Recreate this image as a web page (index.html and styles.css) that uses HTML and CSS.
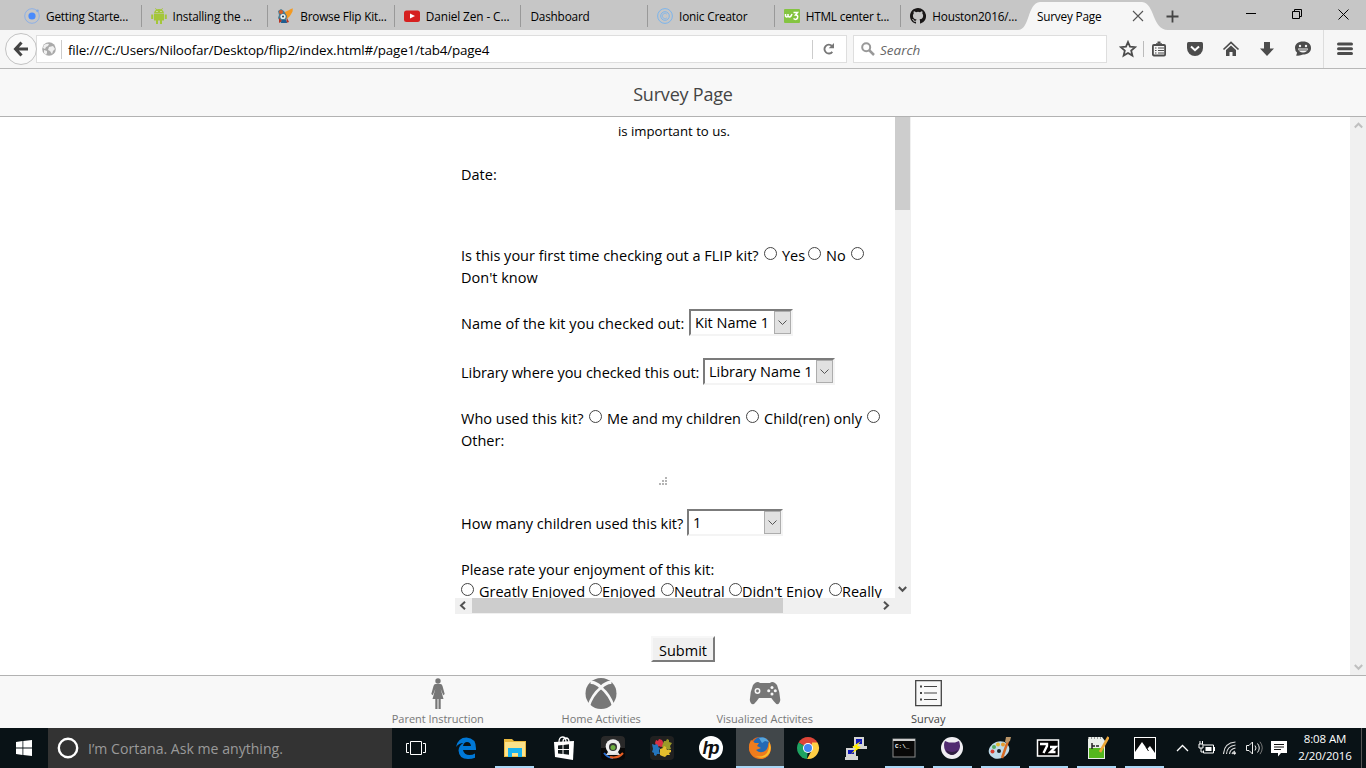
FILE: index.html
```html
<!DOCTYPE html>
<html lang="en">
<head>
<meta charset="utf-8">
<title>Survey Page</title>
<link rel="stylesheet" href="styles.css">
</head>
<body>
<div class="screen">
  <div class="tabs">
    <div class="tab"><svg width="16" height="16"><circle cx="8" cy="8" r="7.3" fill="none" stroke="#8db0e6"/><circle cx="8" cy="8" r="3.6" fill="#4a8bfc"/><circle cx="13.5" cy="2.7" r="1.3" fill="#7ca9ec"/></svg><span class="t1">Getting Starte...</span></div>
    <div class="tab"><svg width="16" height="16" fill="#a4c639"><path d="M3 5.5a5 4.600 0 0 1 10 0zM3 6h10v6.500H3zM.2 6.500h2V11h-2zM13.800 6.500h2V11h-2zM5 12h2v4H5zM9 12h2v4H9z"/><path d="M4.500.3 6 2.500M11.500.3 10 2.500" stroke="#a4c639"/><path d="M5.500 3h1v1h-1zM9.500 3h1v1h-1z" fill="#eee"/></svg><span class="t2">Installing the ...</span></div>
    <div class="tab"><svg width="17" height="16"><path d="M8 4c3-1 6-4 8-3.500-1 2 .5 2-1 4-1 2-3 6-7 7z" fill="#f39a22"/><path d="M1 3l3-2 3 2 3 5-1 5-5 2-3-5 1-3z" fill="#497b91"/><circle cx="4" cy="4" r="2" fill="#d65c27"/><circle cx="6" cy="8.500" r="2.600" fill="#e9f0ee"/><circle cx="6" cy="8.500" r="1" fill="#234"/><path d="M2 10l3 3-3 2zM10 10l2 4-3 1z" fill="#b63221"/><path d="M5 12h4l1 3H4z" fill="#1d5d90"/></svg><span class="t3">Browse Flip Kit...</span></div>
    <div class="tab"><svg width="16" height="16"><rect y="2.500" width="16" height="11.500" rx="2.500" fill="#d6201f"/><path d="M6 5.500v5l5-2.500z" fill="#fff"/></svg><span class="t4">Daniel Zen - C...</span></div>
    <div class="tab"><span class="t5">Dashboard</span></div>
    <div class="tab"><svg width="16" height="16" fill="none" stroke="#7db5ec"><circle cx="8" cy="8" r="7.400"/><circle cx="8" cy="8" r="4.300"/><path d="M10 6.200a2.700 2.700 0 1 0 0 3.600" stroke-width=".8"/></svg><span class="t6">Ionic Creator</span></div>
    <div class="tab"><svg width="16" height="16"><rect y="1" width="16" height="14" rx="1" fill="#84c441"/><path d="M1.500 6v2q1.500 2 2.500 0V6v2q1.500 2 3 0l1-2M9.500 4.500h4L11.500 7q3 0 2 3-1.500 2.500-4 .5" fill="none" stroke="#fff" stroke-width="1.500"/></svg><span class="t7">HTML center t...</span></div>
    <div class="tab last"><svg width="16" height="16" viewBox="0 0 16 16"><path fill="#191717" d="M8 0C3.580 0 0 3.580 0 8c0 3.540 2.290 6.530 5.470 7.590.4.070.55-.17.55-.38v-1.490c-2.010.37-2.530-.49-2.690-.94-.09-.23-.48-.94-.82-1.130-.28-.15-.68-.52-.01-.53.63-.01 1.080.58 1.230.82.72 1.210 1.870.87 2.330.66.070-.52.28-.87.51-1.070-1.780-.2-3.640-.89-3.640-3.950 0-.87.31-1.590.82-2.150-.08-.2-.36-1.020.080-2.120 0 0 .67-.21 2.200.82a7.600 7.600 0 0 1 4 0c1.530-1.040 2.200-.82 2.200-.82.44 1.100.16 1.920.080 2.120.51.56.82 1.270.82 2.150 0 3.070-1.870 3.750-3.650 3.950.29.25.54.73.54 1.480v2.200c0 .21.15.46.55.38A8 8 0 0 0 8 0z"/></svg><span class="t8">Houston2016/...</span></div>
    <div class="tab active"><svg class="tab-shape" width="150" height="28"><path d="M0 28C12 28 9 1 22 0H124C137 1 134 28 150 28z" fill="#f6f6f6"/></svg><span class="t9">Survey Page</span><svg class="tab-close" width="12" height="12"><path d="M1 1l10 10M11 1 1 11" stroke="#555" stroke-width="1.100"/></svg></div>
    <svg class="plus" width="13" height="13"><path d="M6.500 0.500v12M.5 6.500h12" stroke="#444" stroke-width="1.800"/></svg>
    <div class="winbtns">
      <svg width="10" height="10"><path d="M0 4.500h10" stroke="#000"/></svg>
      <svg width="10" height="10" fill="none" stroke="#000"><path d="M.5 2.500h7v7h-7zM2.500 2.500v-2h7v7h-2"/></svg>
      <svg width="11" height="11"><path d="M.5.5l10 10M10.500.5l-10 10" stroke="#000"/></svg>
    </div>
  </div>

  <div class="toolbar">
    <div class="back"><svg width="16" height="16"><path d="M8.500 1.500 2.500 8l6 6.500M2.500 8H15" fill="none" stroke="#444" stroke-width="3"/></svg></div>
    <div class="url">
      <svg width="14" height="14"><circle cx="7" cy="7" r="6.800" fill="#aaa"/><path d="M2 3q3-2 5-1L6 4 4 5 3 7 1 6zM7 5l4-1 2 3-2 2-1 3-2-3-2-1zM2 8l3 1v2l-1 2-2-2z" fill="#f0f0f0"/></svg>
      <i class="sep"></i><span class="address">file:///C:/Users/Niloofar/Desktop/flip2/index.html#/page1/tab4/page4</span>
      <i class="sep"></i><svg width="12" height="12"><path d="M9.300 8.800A4.400 4.400 0 1 1 9 3" fill="none" stroke="#777" stroke-width="1.900"/><path d="M11 0v5.200H5.700z" fill="#777"/></svg>
    </div>
    <div class="search"><svg width="14" height="14" fill="none" stroke="#999"><circle cx="5.200" cy="5.200" r="4" stroke-width="2"/><path d="M8 8l5 5" stroke-width="2.500"/></svg><span>Search</span></div>
    <div class="tools">
      <svg width="18" height="18"><path d="M9 2l2 4.700 5.200.5-4 3.400 1.200 5L9 13l-4.400 2.600 1.200-5-4-3.400L7 6.700z" fill="none" stroke="#4c4c4c" stroke-width="1.800"/></svg>
      <i class="tool-sep"></i>
      <svg width="18" height="18" fill="none" stroke="#4c4c4c"><rect x="2.900" y="5" width="12.200" height="10.500" rx="1" stroke-width="1.800"/><path d="M6 4.500h6" stroke-width="2.500"/><path d="M7.500 2.500h3" stroke-width="2"/><path d="M5 8h1.500M8 8h6M5 10.500h1.500M8 10.500h6M5 13h1.500M8 13h6"/></svg>
      <svg width="18" height="18"><path d="M1 3.500Q1 2 2.500 2h13Q17 2 17 3.500V8a8 8 0 0 1-16 0z" fill="#4c4c4c"/><path d="M5 6.500l4 3.700 4-3.700" fill="none" stroke="#fff" stroke-width="2"/></svg>
      <svg width="18" height="18"><path d="M1.500 9.500 9 2.500l7.500 7" fill="none" stroke="#4c4c4c" stroke-width="1.700"/><path d="M4 10l5-4.500 5 4.500v6h-3.500v-4h-3v4H4z" fill="#4c4c4c"/></svg>
      <svg width="18" height="18"><path d="M6 2h6v6.500h4L9 16 2 8.500h4z" fill="#4c4c4c"/></svg>
      <svg width="18" height="18"><path d="M9 1.500c5 0 8 2.500 8 6.500s-3 6.500-8 6.500Q6 16 2 15.500 3 14 3 12.500 1 11 1 8c0-4 3-6.500 8-6.500z" fill="#4c4c4c"/><circle cx="6" cy="6" r="1.200" fill="#f6f6f6"/><circle cx="12" cy="6" r="1.200" fill="#f6f6f6"/><path d="M4 8.500h10q-1 4-5 4t-5-4z" fill="#f6f6f6"/><path d="M5 10h8" stroke="#4c4c4c"/></svg>
    </div>
    <div class="menu"><svg width="16" height="14"><path d="M1.500 2h13M1.500 6.700h13M1.500 11.400h13" stroke="#4c4c4c" stroke-width="3" stroke-linecap="round"/></svg></div>
  </div>

  <div class="header"><span class="title">Survey Page</span></div>

  <div class="content">
    <div class="main">
      <div class="survey">
        <div class="form">
          <div class="intro">is important to us.</div>
          <div class="row date">Date:</div>
          <div class="row first"><span class="w298">Is this your first time checking out a FLIP kit?</span><i class="radio"></i><span class="w21">Yes</span><i class="radio"></i><span class="w20">No</span><i class="radio"></i></div>
          <div class="row">Don't know</div>
          <div class="row pick kit"><span class="w224">Name of the kit you checked out:</span><div class="select s1"><span>Kit Name 1</span><b><svg width="9" height="6"><path d="M.5.5l4 4 4-4" fill="none" stroke="#555"/></svg></b></div></div>
          <div class="row pick library"><span class="w238">Library where you checked this out:</span><div class="select s2"><span>Library Name 1</span><b><svg width="9" height="6"><path d="M.5.5l4 4 4-4" fill="none" stroke="#555"/></svg></b></div></div>
          <div class="row who"><span class="w123">Who used this kit?</span><i class="radio"></i><span class="w134">Me and my children</span><i class="radio"></i><span class="w98">Child(ren) only</span><i class="radio"></i></div>
          <div class="row">Other:</div>
          <div class="grip"><svg width="8" height="8" fill="#b4b4b4"><path d="M6 0h2v2H6zM3 3h2v2H3zM6 3h2v2H6zM0 6h2v2H0zM3 6h2v2H3zM6 6h2v2H6z"/></svg></div>
          <div class="row pick"><span class="w222">How many children used this kit?</span><div class="select s3"><span>1</span><b><svg width="9" height="6"><path d="M.5.5l4 4 4-4" fill="none" stroke="#555"/></svg></b></div></div>
          <div class="row rate">Please rate your enjoyment of this kit:</div>
          <div class="row ratings"><i class="radio"></i><span class="w105">Greatly Enjoyed</span><i class="radio"></i><span class="w54">Enjoyed</span><i class="radio"></i><span class="w50">Neutral</span><i class="radio"></i><span class="w82">Didn't Enjoy</span><i class="radio"></i><span>Really</span></div>
        </div>
        <div class="vbar"><div class="vthumb"></div><svg width="9" height="7"><path d="M.8 1l3.700 3.800L8.200 1" fill="none" stroke="#505050" stroke-width="2"/></svg></div>
        <div class="hbar"><svg width="7" height="9"><path d="M6 .8 2 4.500l4 3.700" fill="none" stroke="#505050" stroke-width="2"/></svg><div class="hthumb"></div><svg class="right" width="7" height="9"><path d="M1 .8l4 3.700-4 3.700" fill="none" stroke="#505050" stroke-width="2"/></svg></div>
      </div>
      <div class="submit"><span>Submit</span></div>
    </div>
    <div class="pagebar"><svg width="9" height="7"><path d="M.8 5.500l3.700-3.800 3.700 3.800" fill="none" stroke="#bfbfbf" stroke-width="2"/></svg><svg width="9" height="7"><path d="M.8 1l3.700 3.800L8.200 1" fill="none" stroke="#bfbfbf" stroke-width="2"/></svg></div>
  </div>

  <div class="footer">
    <div class="nav"><svg width="32" height="32" fill="#777"><circle cx="16" cy="3" r="2.700"/><path d="M13.500 6h5q1.500 0 2 2l2.200 8-1.500 1.300L18.700 11l2.800 10h-2.800v10h-2.200V21h-1v10h-2.200V21h-2.800l2.800-10-2.500 6.300L9.300 16l2.200-8q.5-2 2-2z"/></svg><span class="n1">Parent Instruction</span></div>
    <div class="nav"><svg width="32" height="32"><circle cx="16" cy="15.500" r="15.500" fill="#777"/><path d="M3.500 28.500Q7 17 16 9.500 25 17 28.500 28.500" fill="none" stroke="#f8f8f8" stroke-width="2.700"/><path d="M5.500 4.500Q10.500 4 16 9.500 21.500 4 26.500 4.500" fill="none" stroke="#f8f8f8" stroke-width="3.200"/></svg><span class="n2">Home Activities</span></div>
    <div class="nav"><svg width="32" height="32"><path d="M6 5q3-2 5 0h10q2-2 5 0l2 2q3 7 3.300 15-.8 5-4 4-3-3-5-6H10q-2 3-5 6-3.500 1-4.200-4Q1 14 4 7z" fill="#777"/><circle cx="8.500" cy="13" r="2.200" fill="none" stroke="#f8f8f8" stroke-width="1.500"/><g fill="#f8f8f8"><circle cx="23" cy="9.500" r="1.500"/><circle cx="23" cy="16" r="1.500"/><circle cx="19.700" cy="12.700" r="1.500"/><circle cx="26.300" cy="12.700" r="1.500"/></g></svg><span class="n3">Visualized Activites</span></div>
    <div class="nav on"><svg width="32" height="32"><path d="M3.700 2.700h25.600v25H3.700z" fill="none" stroke="#444" stroke-width="1.300"/><path d="M12 8.500h13M12 15h13M12 21.500h13" stroke="#444" stroke-width="1.200"/><path d="M8 7.500h2v2H8zM8 14h2v2H8zM8 20.500h2v2H8z" fill="#444"/></svg><span class="n4">Survay</span></div>
  </div>

  <div class="taskbar">
    <div class="start"><svg width="16" height="16" fill="#fff"><path d="M0 2l6.500-.9v6.400H0zM7.300 1 16 0v7.500H7.300zM0 8.400h6.500v6.500L0 14zM7.300 8.400H16V16l-8.700-1z"/></svg></div>
    <div class="cortana"><svg width="22" height="22"><circle cx="11" cy="11" r="9.200" fill="none" stroke="#fff" stroke-width="2.400"/></svg><span>I’m Cortana. Ask me anything.</span></div>
    <div class="apps">
      <div class="app wide"><svg width="24" height="24" fill="none" stroke="#fff"><path d="M5.500 5.500h11v13h-11zM4 7.500H1.500v9H4M18 7.500h2.500v9H18"/></svg></div>
      <div class="app wide"><svg width="24" height="24"><path d="M2 11Q4 1.500 12.500 1.500 22 2 22 12.500V14H9q1 5 6.500 5 3 0 5.500-1.500v4.300Q18 23 14 23 5 23 4.500 14.500 5 9 9.500 7 5 7 2 11zm7-1h8q-.5-4-4-4-3 0-4 4z" fill="#0078d7"/></svg></div>
      <div class="app wide run"><svg width="24" height="24"><path d="M1 3h8l2 2h12v16H1z" fill="#e9b83f"/><path d="M2 6h20v14H2z" fill="#fce28a"/><path d="M5 12h14v9h-4v-4H9v4H5z" fill="#1ab3ee"/></svg></div>
      <div class="app wide"><svg width="24" height="24"><path d="M7 6Q7 1 10.500 1T14 6M11 6q0-4 3-4t3 4" fill="none" stroke="#fff" stroke-width="1.300"/><path d="M2 6l20-1-1 19L3 21z" fill="#fff"/><path d="M6 9.500l4.500-.5v4H6zM11.500 8.900l5.500-.6V13h-5.500zM6 14h4.500v4L6 17.500zM11.500 14H17v4.700l-5.500-.6z" fill="#11191b"/></svg></div>
      <div class="app wide"><svg width="24" height="24"><rect width="24" height="24" rx="4" fill="#080808"/><path d="M0 4q0-4 4-4h16q4 0 4 4v8H0z" fill="#292929"/><path d="M3 17q4 5 9 5" stroke="#2870d6" stroke-width="2" fill="none"/><path d="M9 21q8 2 13-4" stroke="#e65e24" stroke-width="2" fill="none"/><path d="M7 16h10l2 3H5z" fill="#ddd"/><circle cx="12" cy="10.500" r="7.300" fill="#eee"/><circle cx="12" cy="11" r="4" fill="#343434"/><circle cx="12" cy="11.500" r="2.500" fill="#6dae3f"/></svg></div>
      <div class="app wide"><svg width="24" height="24"><rect width="24" height="24" rx="4" fill="#202020"/><path d="M6 4l2 1 1-2 3 1 1 2 1 4-3 1-2-1-1 1-2-2-1-2z" fill="#d73045"/><path d="M14 5l2 0 1-2 2 1v2l3 1-2 3 1 3-3 1-2-2-3 1-1-3z" fill="#9b9a29"/><path d="M2 8l3 1 1-1 2 1v2l2 1-1 3 1 3-3 0-1 2-2-1v-2l-2-1 1-3z" fill="#2474bd"/><path d="M10 13l3-1 1-2 2 1 1 3 4 0v2l-2 1 1 2-3 0-2 2-3-1-2-1z" fill="#e5bd2d"/></svg></div>
      <div class="app wide"><svg width="24" height="24"><circle cx="12" cy="12" r="12" fill="#fff"/><text x="3.500" y="17.500" class="hp" textLength="17">hp</text></svg></div>
      <div class="app run current"><svg width="24" height="24"><circle cx="12" cy="12" r="11" fill="#e8681b"/><circle cx="13" cy="9.500" r="8.500" fill="#236ab4"/><path d="M11 2q7-2 10 4l-4-1-3 2z" fill="#55a5dc"/><path d="M3 4l4 3 4 0-2 3 4 2-5 2q4 4 9 1 4-3 3-9 5 8 0 14-7 6-15 0-7-7-2-16z" fill="#ee7c1d"/><path d="M21 5q4 8-1 14-6 5-13 1 8 2 12-3 3-5 2-12z" fill="#f9c12e"/></svg></div>
      <div class="app"><svg width="24" height="24"><path d="M12 12 2.500 6.500A11 11 0 0 1 21.500 6.500z" fill="#dd4538"/><path d="M12 12 2.500 6.500A11 11 0 0 0 11 23z" fill="#1ea362"/><path d="M11 23l5-9 0-7.500h5.500A11 11 0 0 1 11 23z" fill="#ffce44"/><circle cx="12" cy="12" r="5" fill="#fff"/><circle cx="12" cy="12" r="4" fill="#4285f4"/></svg></div>
      <div class="app"><svg width="24" height="24"><path d="M10 1h10v9h3v3H9v-3h1zM2 12h10v8h2v4H1v-3h1z" fill="#d5d5d5"/><path d="M12 3h6v5h-6zM4 14h6v4H4z" fill="#1018bb"/><path d="M17 5l-9 6 4 1-5 6 10-7-4-1z" fill="#ffeb00"/></svg></div>
      <div class="app run"><svg width="24" height="24"><rect x="1" y="3" width="22" height="18" fill="#080808" stroke="#8a8a8a"/><path d="M1 3h22v2H1z" fill="#ccc"/><text x="3" y="11.500" class="cmd">C:\_</text></svg></div>
      <div class="app run"><svg width="24" height="24"><circle cx="12" cy="12" r="11" fill="#f0eef2"/><path d="M5 5l4 1.500h6L19 5q2 5 0 9-2 4-7 4.500Q6 18 5 14 3 9 5 5z" fill="#512a70"/><path d="M6 14q6 4 12 0-2 5-6 5t-6-5z" fill="#302040"/></svg></div>
      <div class="app run"><svg width="24" height="24"><ellipse cx="11" cy="14" rx="10.500" ry="8.500" transform="rotate(-20 11 14)" fill="#bfdbea"/><circle cx="6" cy="11" r="2" fill="#56ad61"/><circle cx="10" cy="8.500" r="2" fill="#e2ba37"/><circle cx="15" cy="8.500" r="2" fill="#e69b2d"/><circle cx="4.500" cy="15.500" r="2" fill="#d54031"/><circle cx="11" cy="15" r="2" fill="#17242a"/><path d="M14 22 20 5" stroke="#d76b25" stroke-width="2.500"/><path d="M18 1h5l-1 4-3 2-2-1z" fill="#b99467"/></svg></div>
      <div class="app run"><svg width="24" height="24"><rect x="1.500" y="4" width="21" height="16" fill="#000" stroke="#fff" stroke-width="1.500"/><path d="M4 8h7v2l-3.500 7M14 11h5.500l-5 5h5" fill="none" stroke="#fff" stroke-width="2.400"/></svg></div>
      <div class="app run"><svg width="24" height="24"><path d="M3 1h14l3 4v18H3z" fill="#e9eee9"/><path d="M4 12h15v10H4z" fill="#54b71e"/><path d="M3 2h14" stroke="#999" stroke-dasharray="1 2" stroke-width="2"/><path d="M7 7v6m0-3h3m1 0h3" stroke="#222" stroke-width="1.500"/><path d="M15 16 23.500 1" stroke="#eda738" stroke-width="2.600"/></svg></div>
      <div class="app run"><svg width="24" height="24"><rect x="1.500" y="1.500" width="21" height="21" fill="#080b0c" stroke="#fff"/><path d="M2 16l7-10 5 7 3-3 5 7v5H2z" fill="#fff"/><path d="M13 11l2.500 4" stroke="#080b0c"/></svg></div>
    </div>
    <div class="tray">
      <svg width="13" height="8"><path d="M1 7l5.500-5.500L12 7" fill="none" stroke="#fff" stroke-width="1.300"/></svg>
      <svg width="17" height="14"><path d="M5.500 4h10v8h-10V9.500M1 3h4v4H1zM2 0v3M4.500 0v3M3 7v4h3" fill="none" stroke="#fff"/><path d="M7.500 6h6v4h-6zM16 6h1v4h-1z" fill="#fff"/></svg>
      <svg width="14" height="14" fill="none" stroke="#ddd"><path d="M.5 13Q1 2 12.500 1M3.500 13q.5-8 9-9M6.500 13q.5-5 6-6M9 13q.5-2 3-3" stroke-width="1.100"/><circle cx="11.500" cy="12.200" r="1" fill="#fff"/></svg>
      <svg width="17" height="14" fill="none" stroke="#eee"><path d="M.5 4.500h2.500l3.500-3.500v12L3 9.500H.5zM9 4.500q2 2.500 0 5M11.500 2.500q3.500 4.500 0 9"/><path d="M14 .8q4.500 6 0 12.400" stroke="#777"/></svg>
      <svg width="16" height="17"><path d="M0 1h16v12h-6l-3 3.500V13H0z" fill="#fff"/><path d="M3 4.500h10M3 7h10M3 9.500h7" stroke="#111"/></svg>
    </div>
    <div class="clock"><span class="time">8:08 AM</span><span class="day">2/20/2016</span></div>
    <i class="peek"></i>
  </div>
</div>
</body>
</html>
```
FILE: styles.css
```css
* { box-sizing: border-box; }
body { margin: 0; font-family: "Open Sans", "Noto Sans", sans-serif; color: #000; }
svg { display: block; flex: none; }
span { white-space: nowrap; }
.screen { width: 1366px; height: 768px; overflow: hidden; display: flex; flex-direction: column; background: #fff; }

/* browser tabs */
.tabs { height: 30px; flex: none; background: #c6c6c6; padding-left: 15px; display: flex; align-items: center; font-size: 11.8px; letter-spacing: -.2px; }
.tab { width: 126.620px; height: 30px; flex: none; display: flex; align-items: center; gap: 6px; padding: 2px 0 0 9px; background: linear-gradient(#999, #999) right 5px / 1px 22px no-repeat; }
.tab.last { background: none; }
.tab.active { position: relative; width: 134px; background: none; padding-left: 9px; justify-content: space-between; padding-right: 18px; }
.tab-shape { position: absolute; left: -10px; top: 2px; }
.tab.active span, .tab-close { position: relative; }
.t4 { letter-spacing: -.1px; }
.plus { margin: 2px 0 0 4px; }
.winbtns { margin-left: auto; padding: 0 17px 2px 0; display: flex; gap: 36px; align-items: center; }

/* toolbar */
.toolbar { height: 39px; flex: none; background: #f6f6f6; border-bottom: 1px solid #b8b8b8; display: flex; align-items: center; padding-left: 5px; }
.back { width: 32px; height: 32px; flex: none; border: 1px solid #c3c3c3; border-radius: 50%; background: #fafafa; display: flex; align-items: center; justify-content: center; z-index: 1; }
.url { width: 811px; height: 28px; flex: none; margin-left: -1px; border: 1px solid #dedede; background: #fff; display: flex; align-items: center; padding: 0 11px 0 5px; gap: 5px; font-size: 13.4px; }
.sep { width: 1px; height: 19px; background: #ccc; }
.address { flex: 1; letter-spacing: -.165px; padding: 1px 0 0 1px; }
.url > svg:last-child { margin-left: 5px; }
.search { width: 254px; height: 28px; flex: none; margin-left: 6px; border: 1px solid #dedede; background: #fff; display: flex; align-items: center; gap: 5px; padding-left: 7px; font-size: 13.5px; font-style: italic; color: #666; }
.search span { padding-top: 1px; }
.tools { display: flex; align-items: center; gap: 18px; padding-left: 12px; width: 216px; flex: none; }
.tool-sep { width: 1px; height: 16px; flex: none; background: #bbb; margin: 0 -12px 0 -12px; }
.menu { height: 38px; flex: 1; border-left: 1px solid #ddd; display: flex; align-items: center; justify-content: center; }

/* page */
.header { height: 48px; flex: none; background: #f8f8f8; border-bottom: 1px solid #b2b2b2; text-align: center; padding-top: 13px; line-height: 24px; font-size: 18px; letter-spacing: -.2px; color: #444; }
.content { height: 558px; flex: none; display: flex; }
.main { flex: 1; display: flex; flex-direction: column; align-items: flex-start; padding-left: 455px; }
.pagebar { width: 16px; background: #f0f0f0; display: flex; flex-direction: column; align-items: center; justify-content: space-between; padding: 5px 0 4px; }
.survey { width: 456px; height: 497px; display: grid; grid-template: 481px 16px / 440px 16px; background: #f0f0f0; }
.form { background: #fff; overflow: hidden; padding-left: 6px; font-size: 14.500px; }
.intro { width: 426px; height: 22px; margin-top: 3px; text-align: center; font-size: 13.2px; line-height: 22px; }
.row { height: 22px; line-height: 22px; display: flex; align-items: center; white-space: nowrap; gap: 5px; }
.date { margin-top: 22px; }
.first { margin-top: 59px; }
.pick { height: 27px; gap: 4px; }
.pick > span { padding-top: 2px; }
.kit { margin-top: 20px; }
.library { margin-top: 22px; }
.who { margin-top: 23px; }
.grip { height: 57px; padding: 25px 0 0 198px; }
.rate { margin-top: 23px; letter-spacing: -.05px; }
.ratings { gap: 0; }
.ratings .radio + span { margin-right: 5px; }
.ratings .radio:first-child { margin-right: 5px; }
.radio { width: 13px; height: 13px; flex: none; border: 1px solid #444; border-radius: 50%; background: #fff; margin-bottom: 5px; }
.w298 { width: 298px; } .w21 { width: 21px; } .w20 { width: 20px; } .w224 { width: 224px; letter-spacing: .03px; } .w238 { width: 238px; letter-spacing: -.05px; }
.w123 { width: 123px; } .w134 { width: 134px; } .w98 { width: 98px; } .w222 { width: 222px; }
.w105 { width: 105px; } .w54 { width: 54px; } .w50 { width: 50px; } .w82 { width: 82px; }
.select { height: 27px; border: 2px solid; border-color: #7b7b7b #f4f4f4 #f4f4f4 #7b7b7b; display: flex; justify-content: space-between; padding-left: 4px; }
.select span { padding-top: 1px; }
.select b { width: 17px; height: 23px; background: #e1e1e1; border: 1px solid #adadad; display: flex; align-items: center; justify-content: center; }
.s1 { width: 104px; } .s2 { width: 132px; } .s3 { width: 96px; }
.vbar { display: flex; flex-direction: column; align-items: center; justify-content: space-between; padding: 0 1px 5px 0; }
.vthumb { width: 15px; height: 93px; background: #cdcdcd; }
.hbar { grid-column: 1 / 3; display: flex; align-items: center; padding: 0 0 1px 4px; }
.hthumb { width: 311px; height: 15px; background: #cdcdcd; margin: 0 100px 0 6px; }
.submit { margin: 22px 0 0 196px; width: 64px; height: 26px; background: #f0f0f0; border: 2px solid; border-color: #f7f7f7 #7b7b7b #7b7b7b #f7f7f7; font-size: 14.500px; line-height: 25px; display: flex; justify-content: center; }

.footer { height: 53px; flex: none; border-top: 1px solid #b2b2b2; background: #f8f8f8; display: flex; justify-content: center; }
.nav { width: 163.500px; display: flex; flex-direction: column; align-items: center; padding-top: 2px; font-size: 11px; line-height: 18px; color: #777; }
.n1 { letter-spacing: -.03px; }
.nav.on { color: #444; }

/* taskbar */
.taskbar { height: 40px; flex: none; background: #091216; color: #fff; display: flex; align-items: center; }
.start { width: 48px; display: flex; justify-content: center; }
.cortana { width: 344px; height: 40px; background: #333; color: #9a9a9a; font-size: 14.1px; display: flex; align-items: center; gap: 9px; padding-left: 9px; }
.apps { width: 776px; display: flex; }
.app { width: 48.100px; height: 40px; flex: none; display: flex; align-items: center; justify-content: center; background: linear-gradient(#a9d6f5, #a9d6f5) center bottom / 0 2px no-repeat; }
.app.wide { width: 49.140px; }
.app.run { background-size: 39px 2px; }
.app.current { background-color: #41474a; background-size: 48px 2px; }
.hp { font: italic bold 18px "Liberation Sans", sans-serif; fill: #111; }
.cmd { font: bold 6px "Liberation Mono", monospace; fill: #fff; }
.tray { width: 121px; display: flex; align-items: center; justify-content: space-between; padding: 0 2px 0 8px; }
.clock { width: 72px; display: flex; flex-direction: column; align-items: center; font-size: 11.500px; line-height: 17px; padding-bottom: 2px; letter-spacing: -.1px; }
.peek { width: 1px; height: 40px; background: #555; }
```
